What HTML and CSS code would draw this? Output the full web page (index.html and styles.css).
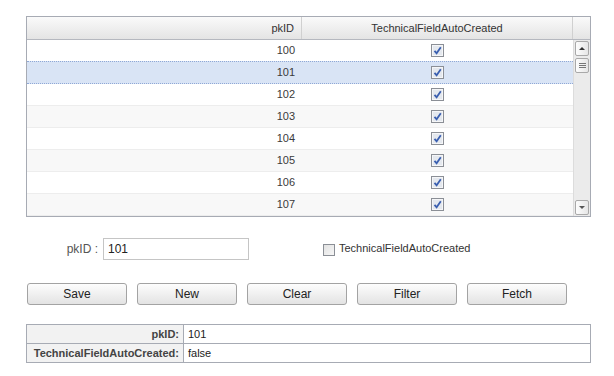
FILE: index.html
```html
<!DOCTYPE html>
<html lang="en">
<head>
  <meta charset="UTF-8" />
  <title>pkID grid</title>
  <link rel="stylesheet" href="styles.css">
</head>
<body>
  <div class="page">
    <div class="grid">
      <div class="grid-header">
        <div class="hcell col-id">pkID</div>
        <div class="hcell col-flag">TechnicalFieldAutoCreated</div>
        <div class="hcell col-corner"></div>
      </div>
      <div class="grid-body">
        <div class="rows" id="rows"></div>
        <div class="scrollbar">
          <div class="sb-btn sb-up"><span class="arrow-up"></span></div>
          <div class="sb-thumb"><span></span><span></span><span></span></div>
          <div class="sb-track"></div>
          <div class="sb-btn sb-down"><span class="arrow-down"></span></div>
        </div>
      </div>
    </div>

    <form class="edit-form">
      <label class="field-label" for="pkid">pkID :</label>
      <input type="text" id="pkid" class="field-input" value="101" />
      <label class="check-field">
        <span class="check-box empty"></span>
        TechnicalFieldAutoCreated
      </label>
    </form>

    <div class="buttons">
      <button class="btn">Save</button>
      <button class="btn">New</button>
      <button class="btn">Clear</button>
      <button class="btn">Filter</button>
      <button class="btn">Fetch</button>
    </div>

    <table class="detail">
      <tr>
        <th>pkID:</th>
        <td>101</td>
      </tr>
      <tr>
        <th>TechnicalFieldAutoCreated:</th>
        <td>false</td>
      </tr>
    </table>
  </div>

  <script>
    const rows = document.querySelector("#rows");
    const check = '<svg width="13" height="13" viewBox="0 0 13 13"><rect x="0.5" y="0.5" width="12" height="12" fill="#e4e8ee" stroke="#8b8f96"/><rect x="1.5" y="1.5" width="10" height="10" fill="none" stroke="#f5f6f8"/><path d="M3.5 6.8 L5.6 9.3 L9.8 3.2" fill="none" stroke="#3a5fb0" stroke-width="1.8"/></svg>';

    for (let i = 100; i <= 107; i++) {
      const row = document.createElement("div");
      row.className = "row";
      if (i === 101) row.classList.add("selected");
      else if ((i - 100) % 2 === 1) row.classList.add("alt");
      row.innerHTML = `
        <div class="cell col-id">${i}</div>
        <div class="cell col-flag">${check}</div>
      `;
      rows.appendChild(row);
    }
  </script>
</body>
</html>
```

FILE: styles.css
```css
body {
  margin: 0;
  background: #fff;
  font-family: "Liberation Sans", Arial, sans-serif;
  font-size: 11px;
  color: #333;
}

.page {
  padding: 16px 0 0 26px;
  width: 565px;
}

/* grid */
.grid {
  border: 1px solid #a7abb4;
  width: 563px;
}

.grid-header {
  display: flex;
  height: 22px;
  border-bottom: 1px solid #b5b8bf;
  background: linear-gradient(#fafafa, #e4e4e4);
}

.hcell {
  line-height: 22px;
  color: #333;
  border-right: 1px solid #d0d0d0;
  box-sizing: border-box;
}

.col-id {
  width: 275px;
  text-align: right;
  padding-right: 7px;
  box-sizing: border-box;
}

.col-flag {
  width: 271px;
  text-align: center;
}

.col-corner {
  width: 17px;
  border-right: none;
}

.grid-body {
  display: flex;
  height: 176px;
}

.rows {
  width: 546px;
}

.row {
  display: flex;
  height: 22px;
  box-sizing: border-box;
  border-bottom: 1px solid #ededed;
  background: #fff;
}

.row.alt {
  background: #f8f8f8;
}

.row.selected {
  background: #d9e4f5;
  border-top: 1px dotted #8fa8d6;
  border-bottom: 1px dotted #8fa8d6;
  margin-top: -1px;
  height: 23px;
}

.cell {
  line-height: 21px;
  color: #3a3a3a;
}

.cell.col-flag {
  display: flex;
  align-items: center;
  justify-content: center;
}

/* scrollbar */
.scrollbar {
  width: 17px;
  background: #ebebeb;
  border-left: 1px solid #dcdcdc;
  box-sizing: border-box;
  display: flex;
  flex-direction: column;
  align-items: center;
  padding: 1px 0;
}

.sb-btn,
.sb-thumb {
  width: 14px;
  box-sizing: border-box;
  border: 1px solid #a9a9a9;
  border-radius: 2px;
  background: linear-gradient(90deg, #fdfdfd, #e6e6e6);
}

.sb-btn {
  height: 15px;
  display: flex;
  align-items: center;
  justify-content: center;
}

.sb-thumb {
  height: 15px;
  margin-top: 2px;
  display: flex;
  flex-direction: column;
  align-items: center;
  justify-content: center;
  gap: 1px;
}

.sb-thumb span {
  width: 7px;
  height: 1px;
  background: #777;
}

.sb-track {
  flex: 1;
}

.arrow-up {
  border-left: 3px solid transparent;
  border-right: 3px solid transparent;
  border-bottom: 3px solid #333;
}

.arrow-down {
  border-left: 3px solid transparent;
  border-right: 3px solid transparent;
  border-top: 3px solid #555;
}

/* form */
.edit-form {
  display: flex;
  align-items: center;
  margin-top: 21px;
  height: 22px;
}

.field-label {
  width: 72px;
  text-align: right;
  font-size: 12px;
  color: #555;
}

.field-input {
  margin-left: 5px;
  width: 146px;
  height: 22px;
  box-sizing: border-box;
  border: 1px solid #c5c5c5;
  padding: 0 4px;
  font-family: "Liberation Sans", Arial, sans-serif;
  font-size: 12px;
  color: #222;
}

.check-field {
  margin-left: 74px;
  display: flex;
  align-items: center;
  gap: 4px;
  font-size: 11px;
  color: #333;
  margin-top: -3px;
}

.check-box {
  width: 12px;
  height: 12px;
  box-sizing: border-box;
  border: 1px solid #8b8f96;
  background: linear-gradient(135deg, #e2e2e2, #f6f6f6);
  margin-top: 4px;
}

/* buttons */
.buttons {
  display: flex;
  gap: 10px;
  margin-top: 23px;
  padding-left: 1px;
}

.btn {
  width: 100px;
  height: 22px;
  border: 1px solid #a3a3a3;
  border-radius: 3px;
  background: linear-gradient(#fdfdfd, #e3e3e3);
  font-family: "Liberation Sans", Arial, sans-serif;
  font-size: 12px;
  color: #222;
  padding: 0;
}

/* detail viewer */
.detail {
  margin-top: 19px;
  width: 565px;
  border-collapse: collapse;
  border: 1px solid #a7abb4;
}

.detail th,
.detail td {
  height: 18px;
  border: 1px solid #a7abb4;
  padding: 0 4px;
  font-size: 11px;
}

.detail th {
  width: 148px;
  text-align: right;
  background: #f2f2f2;
  color: #444;
}

.detail td {
  color: #222;
}
```
